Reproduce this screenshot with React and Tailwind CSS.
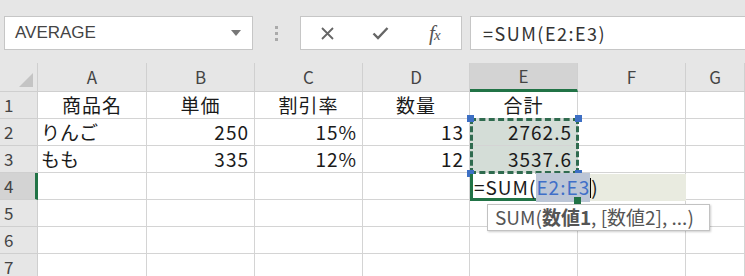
import React from 'react'

const font = { fontFamily: '"Noto Sans CJK JP", "Noto Sans", sans-serif' }

const cols = ['A', 'B', 'C', 'D', 'E', 'F', 'G']

const rows = [
  ['商品名', '単価', '割引率', '数量', '合計', '', ''],
  ['りんご', '250', '15%', '13', '2762.5', '', ''],
  ['もも', '335', '12%', '12', '3537.6', '', ''],
  ['', '', '', '', '', '', ''],
  ['', '', '', '', '', '', ''],
  ['', '', '', '', '', '', ''],
  ['', '', '', '', '', '', ''],
]

function Toolbar() {
  return (
    <div className="h-[63px] bg-[#e6e6e6] flex items-center pl-[4px] pt-[3px]">
      <div className="w-[249px] h-[34px] bg-white border border-[#c6c6c6] flex items-center justify-between pl-[10px] pr-[11px]">
        <span className="text-[17px] text-[#444]" style={{ fontFamily: '"Liberation Sans", Arial, sans-serif' }}>AVERAGE</span>
        <svg width="10" height="6" viewBox="0 0 10 6"><path d="M0 0h10L5 6z" fill="#777" /></svg>
      </div>
      <div className="w-[47px] flex flex-col items-center gap-[3px]">
        <span className="w-[3px] h-[3px] bg-[#aaa]" />
        <span className="w-[3px] h-[3px] bg-[#aaa]" />
        <span className="w-[3px] h-[3px] bg-[#aaa]" />
      </div>
      <div className="w-[162px] h-[34px] bg-white border border-[#c6c6c6] flex items-center">
        <div className="w-[54px] flex justify-center">
          <svg width="15" height="15" viewBox="0 0 15 15"><path d="M2 2l11 11M13 2L2 13" stroke="#666" strokeWidth="1.8" /></svg>
        </div>
        <div className="w-[54px] flex justify-center">
          <svg width="17" height="14" viewBox="0 0 17 14"><path d="M1.5 7.5l4.5 4.5L15.5 2" stroke="#666" strokeWidth="2.4" fill="none" /></svg>
        </div>
        <div className="w-[54px] flex justify-center">
          <span className="italic text-[21px] leading-none text-[#555] tracking-[-1px]" style={{ fontFamily: '"Liberation Serif", serif' }}>f<span className="text-[15px]">x</span></span>
        </div>
      </div>
      <div className="ml-[8px] flex-1 h-[34px] bg-white border border-[#c6c6c6] border-r-0 flex items-center pl-[12px]">
        <span className="text-[18px] text-[#333] tracking-[1.5px]" style={font}>=SUM(E2:E3)</span>
      </div>
    </div>
  )
}

function Grid() {
  return (
    <div className="relative">
      <div className="grid grid-cols-[38px_109px_108px_108px_107px_108px_108px_1fr]" style={font}>
        {/* header row */}
        <div className="h-[29px] bg-[#e6e6e6] border-r border-b border-[#cfcfcf] flex items-end justify-end pr-[4px] pb-[4px]">
          <svg width="14" height="14" viewBox="0 0 14 14"><path d="M14 0v14H0z" fill="#c4c4c4" /></svg>
        </div>
        {cols.map(c => (
          <div
            key={c}
            className={`h-[29px] border-r border-[#d0d0d0] flex items-center justify-center text-[17px] text-[#444] ${
              c === 'E' ? 'bg-[#d3d3d3] border-b-[3px] border-b-[#217346]' : 'bg-[#e6e6e6] border-b border-b-[#cfcfcf]'
            }`}
          >
            {c}
          </div>
        ))}
        {rows.map((r, i) => (
          <React.Fragment key={i}>
            <div
              className={`h-[27px] border-b border-[#cfcfcf] flex items-center pl-[4px] text-[17px] text-[#444] ${
                i === 3 ? 'bg-[#d3d3d3] border-r-[3px] border-r-[#217346]' : 'bg-[#e6e6e6] border-r border-r-[#cfcfcf]'
              }`}
            >
              {i + 1}
            </div>
            {r.map((v, j) => {
              const num = /^[\d.%]+$/.test(v)
              const center = i === 0
              return (
                <div
                  key={j}
                  className={`h-[27px] border-r border-b border-[#d4d4d4] flex items-center text-[19px] text-[#1a1a1a] whitespace-nowrap ${
                    center ? 'justify-center tracking-[1px]' : num ? 'justify-end pr-[5px] tracking-[1px]' : 'justify-start pl-[3px]'
                  } ${j === 4 && (i === 1 || i === 2) ? 'bg-[#d4ddd7]' : 'bg-white'}`}
                >
                  {v}
                </div>
              )
            })}
          </React.Fragment>
        ))}
      </div>

      {/* copy/reference selection E2:E3 */}
      <div className="absolute left-[470px] top-[55px] w-[109px] h-[56px] border-[3px] border-dashed border-[#2f6b4f] pointer-events-none" />
      <span className="absolute left-[467px] top-[52px] w-[7px] h-[7px] bg-[#3d6fc4]" />
      <span className="absolute left-[575px] top-[52px] w-[7px] h-[7px] bg-[#3d6fc4]" />
      <span className="absolute left-[467px] top-[107px] w-[7px] h-[7px] bg-[#3d6fc4]" />
      <span className="absolute left-[575px] top-[107px] w-[7px] h-[7px] bg-[#3d6fc4]" />

      {/* editing cell E4 */}
      <div className="absolute left-[470px] top-[111px] w-[216px] h-[27px] flex" style={font}>
        <div className="w-[108px] h-full bg-white border-l-[3px] border-b-[3px] border-[#217346]" />
        <div className="flex-1 h-full bg-[#e9ebe0]" />
        <div className="absolute inset-0 flex items-center pl-[4px] text-[19px] text-[#1a1a1a] tracking-[1px]">
          =SUM(<span className="bg-[#bcc6d6] text-[#3f6fc8]">E2:E3</span>
          <span className="w-[1px] h-[20px] bg-black" />)
        </div>
        <span className="absolute left-[104px] top-[23px] w-[7px] h-[7px] bg-[#217346]" />
      </div>

      {/* function tooltip */}
      <div
        className="absolute left-[487px] top-[141px] w-[223px] h-[27px] pl-[7px] bg-white border border-[#c2c2c2] shadow-[1px_1px_2px_rgba(0,0,0,0.2)] flex items-center text-[19px] text-[#555] whitespace-nowrap"
        style={{ fontFamily: '"Noto Sans CJK JP", "Liberation Sans", sans-serif' }}
      >
        SUM(<span className="font-bold">数値1</span>, [数値2], ...)
      </div>
    </div>
  )
}

export default function App() {
  return (
    <div className="w-[745px] h-[276px] overflow-hidden bg-white">
      <Toolbar />
      <Grid />
    </div>
  )
}
